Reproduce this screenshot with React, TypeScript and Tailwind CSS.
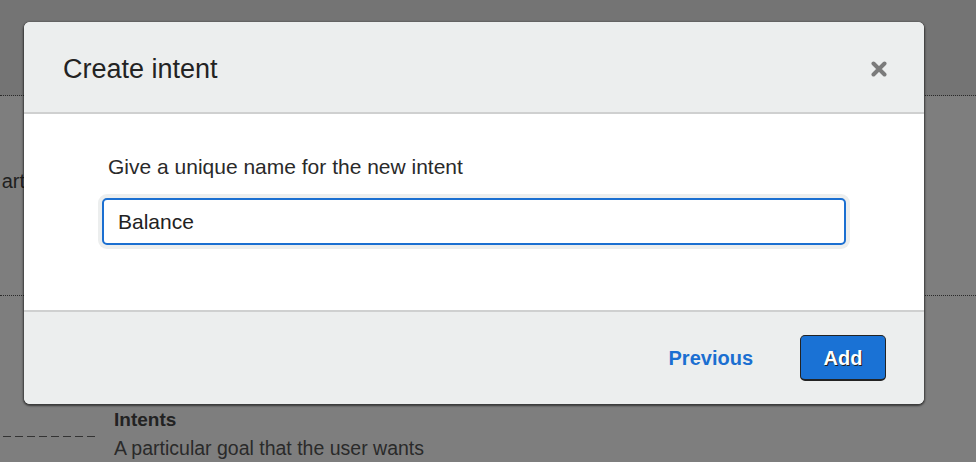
import React from "react";

export default function App() {
  return (
    <div
      className="relative w-[976px] h-[462px] overflow-hidden bg-[#7e7e7e]"
      style={{ fontFamily: '"Liberation Sans", Arial, Helvetica, sans-serif' }}
    >
      {/* dimmed page behind the dialog */}
      <div className="flex flex-col">
        <div className="h-[96px] bg-[#747474] border-b border-dotted border-[#2a2a2a]" />
        <div className="h-[200px] border-b border-dotted border-[#2a2a2a] pt-[73px]">
          <div className="w-[25px] flex justify-end whitespace-nowrap text-[20px] leading-[24px] text-[#1f1f1f]">
            art
          </div>
        </div>
        <div className="flex pt-[112px]">
          <div className="w-[114px] pt-[28px] pl-[3px]">
            <svg width="92" height="2" className="block">
              <line x1="0" y1="0.5" x2="92" y2="0.5" stroke="#333" strokeWidth="1" strokeDasharray="8 4" />
            </svg>
          </div>
          <div className="flex flex-col text-[#222]">
            <div className="text-[19px] leading-[23px] font-bold">Intents</div>
            <div className="mt-[5px] text-[19.5px] leading-[24px] whitespace-nowrap text-[#2a2a2a]">
              A particular goal that the user wants
            </div>
          </div>
        </div>
      </div>

      {/* dialog */}
      <div className="absolute left-[24px] top-[22px] w-[900px] h-[382px] flex flex-col rounded-[6px] overflow-hidden bg-white shadow-[0_1px_2px_1px_rgba(0,0,0,0.55)]">
        <div className="h-[92px] shrink-0 flex items-center justify-between pt-[4px] pl-[39px] pr-[37px] bg-[#eceeee] border-b-2 border-[#cfd0d0]">
          <div className="text-[27px] leading-[32px] text-[#232323]">Create intent</div>
          <svg width="16" height="16" viewBox="0 0 16 16" className="block">
            <path d="M2.5 2.5 L13.5 13.5 M13.5 2.5 L2.5 13.5" stroke="#7b7b7b" strokeWidth="4" strokeLinecap="round" />
          </svg>
        </div>
        <div className="h-[198px] shrink-0 flex flex-col pt-[40px] px-[78px] bg-white border-b-2 border-[#cfd0d0]">
          <div className="pl-[6px] text-[21px] leading-[25px] text-[#2a2a2a]">
            Give a unique name for the new intent
          </div>
          <div className="mt-[19px] h-[47px] flex items-center pl-[14px] border-2 border-[#1b6fd1] rounded-[5px] bg-white shadow-[0_0_0_4px_#eceeee]">
            <span className="text-[21px] leading-[25px] text-[#222]">Balance</span>
          </div>
        </div>
        <div className="flex-1 flex items-center justify-end pr-[38px] bg-[#eceeee]">
          <span className="text-[20px] leading-[24px] font-bold text-[#1b6fd1]">Previous</span>
          <div className="ml-[47px] w-[86px] h-[46px] flex items-center justify-center rounded-[5px] bg-[#1a72d5] border border-b-2 border-[#232323]">
            <span className="text-[20px] leading-[24px] font-bold text-white [text-shadow:1px_1px_0_#1c1c1c]">
              Add
            </span>
          </div>
        </div>
      </div>
    </div>
  );
}
